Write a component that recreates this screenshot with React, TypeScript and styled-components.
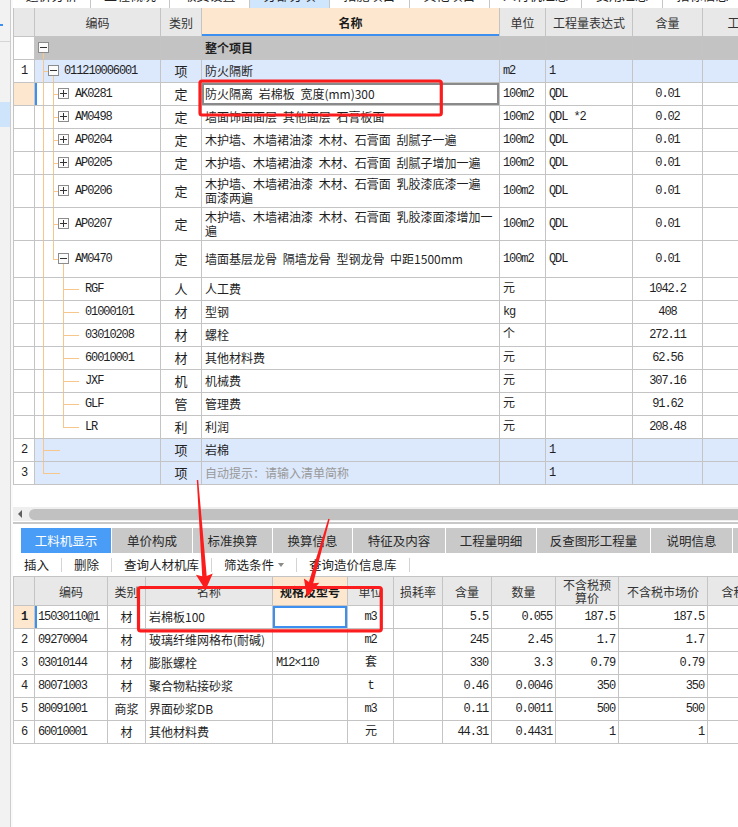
import React from "react";
import styled, { createGlobalStyle, css } from "styled-components";

const LINE = "#c4c4c4";
const TREE = "#f7c68a";
const BLUE = "#3d8ff0";
const PEACH = "#fde8cf";
const ROW_BLUE = "#dce8fb";
const RED = "#fb1d1d";

const GlobalStyle = createGlobalStyle`
  html, body { margin: 0; padding: 0; background: #fff; }
  body {
    font-family: "Noto Sans CJK SC", "Liberation Sans", sans-serif;
    font-size: 12px;
    color: #1f1f1f;
  }
`;

const Page = styled.div`
  position: relative;
  width: 738px;
  height: 827px;
  display: flex;
  overflow: hidden;
  background: #fff;
`;

const Gutter = styled.div`
  flex: none;
  width: 10px;
  border-right: 1px solid #cdcdcd;
  background: #f2f2f2;
  display: flex;
  flex-direction: column;
`;

const GutterMark = styled.div<{ $top: number; $h: number; $w?: number; $color: string }>`
  flex: none;
  margin-top: ${(p) => p.$top}px;
  height: ${(p) => p.$h}px;
  width: ${(p) => (p.$w ? `${p.$w}px` : "100%")};
  background: ${(p) => p.$color};
`;

const GutterGap = styled.div`
  flex: none;
  width: 2px;
  background: #fafafa;
`;

const Main = styled.div`
  flex: 1;
  min-width: 0;
  display: flex;
  flex-direction: column;
  overflow: hidden;
`;

/* ---------- top tab strip (mostly scrolled away) ---------- */

const TopStrip = styled.div`
  flex: none;
  height: 8px;
  display: flex;
  overflow: hidden;
`;

const TopTab = styled.div<{ $w: number; $active?: boolean }>`
  flex: none;
  width: ${(p) => p.$w}px;
  box-sizing: border-box;
  border-right: 1px solid #c6c6c6;
  background: ${(p) => (p.$active ? "#cfe6fc" : "#fff")};
  overflow: hidden;
  text-align: center;
  font-size: 13px;
  line-height: 13px;
  color: #222;

  span {
    display: block;
    margin-top: -12px;
  }
`;

/* ---------- grids ---------- */

type Align = "left" | "center" | "right";
type Tone = "plain" | "root" | "list";

const toneBg = (t: Tone) => (t === "root" ? "#c3c3c3" : t === "list" ? ROW_BLUE : "#fff");

const GridBox = styled.div<{ $top?: boolean }>`
  flex: none;
  display: flex;
  flex-direction: column;
  border-left: 1px solid ${LINE};
  border-top: ${(p) => (p.$top ? `1px solid ${LINE}` : "none")};
`;

const HeadRow = styled.div<{ $h: number }>`
  flex: none;
  display: flex;
  height: ${(p) => p.$h}px;
  box-sizing: border-box;
  border-bottom: 1px solid ${LINE};
  background: #e8e8e8;
`;

const HeadCell = styled.div<{ $w: number; $active?: boolean; $underline?: boolean }>`
  flex: none;
  width: ${(p) => p.$w}px;
  box-sizing: border-box;
  border-right: 1px solid ${LINE};
  display: flex;
  align-items: center;
  justify-content: center;
  text-align: center;
  white-space: pre;
  line-height: 13px;
  color: ${(p) => (p.$active ? "#1a1a1a" : "#333")};
  font-weight: ${(p) => (p.$active ? 700 : 400)};
  background: ${(p) => (p.$active ? PEACH : "transparent")};
  box-shadow: ${(p) => (p.$underline ? `inset 0 -2px 0 ${BLUE}` : "none")};
  overflow: hidden;
`;

const Row = styled.div<{ $h: number; $tone: Tone }>`
  flex: none;
  display: flex;
  height: ${(p) => p.$h}px;
  box-sizing: border-box;
  border-bottom: 1px solid ${LINE};
  background: ${(p) => toneBg(p.$tone)};
`;

const Cell = styled.div<{
  $w: number;
  $align?: Align;
  $bg?: string;
  $focus?: "gray" | "blue";
  $mark?: boolean;
  $size?: number;
}>`
  flex: none;
  position: relative;
  width: ${(p) => p.$w}px;
  box-sizing: border-box;
  border-right: 1px solid ${LINE};
  display: flex;
  align-items: center;
  justify-content: ${(p) =>
    p.$align === "center" ? "center" : p.$align === "right" ? "flex-end" : "flex-start"};
  padding: 0 3px;
  overflow: hidden;
  white-space: pre;
  line-height: 14px;
  font-size: ${(p) => p.$size ?? 12}px;
  background: ${(p) => p.$bg ?? "transparent"};
  ${(p) =>
    p.$focus === "gray" &&
    css`
      box-shadow: inset 0 0 0 2px #8a8a8a;
    `}
  ${(p) =>
    p.$focus === "blue" &&
    css`
      box-shadow: inset 0 0 0 2px ${BLUE};
    `}
  ${(p) =>
    p.$mark &&
    css`
      box-shadow: inset 2px 0 0 ${BLUE};
    `}
`;

const CodeCell = styled(Cell)<{ $indent: number }>`
  padding-left: ${(p) => p.$indent}px;
`;

const Mono = styled.span<{ $bold?: boolean }>`
  font-family: "Liberation Mono", "Noto Sans CJK SC", monospace;
  font-size: 12px;
  letter-spacing: -1.1px;
  font-weight: ${(p) => (p.$bold ? 700 : 400)};
`;

const Name = styled.span<{ $bold?: boolean; $hint?: boolean }>`
  word-spacing: 3px;
  font-weight: ${(p) => (p.$bold ? 700 : 400)};
  color: ${(p) => (p.$hint ? "#999" : "inherit")};
`;

type Part = "full" | "top" | "bottom";

const Guide = styled.span<{ $x: number; $part: Part }>`
  position: absolute;
  left: ${(p) => p.$x}px;
  width: 1px;
  top: ${(p) => (p.$part === "bottom" ? "50%" : "0")};
  bottom: ${(p) => (p.$part === "top" ? "50%" : "0")};
  background: ${TREE};
`;

const Branch = styled.span<{ $from: number; $to: number }>`
  position: absolute;
  left: ${(p) => p.$from}px;
  width: ${(p) => p.$to - p.$from}px;
  top: 50%;
  height: 1px;
  background: ${TREE};
`;

const Toggle = styled.span<{ $x: number; $open: boolean }>`
  position: absolute;
  left: ${(p) => p.$x}px;
  top: 50%;
  margin-top: -6px;
  width: 11px;
  height: 11px;
  box-sizing: border-box;
  border: 1px solid #8c8c8c;
  background: #fbfbfb;

  &::before {
    content: "";
    position: absolute;
    left: 1px;
    right: 1px;
    top: 4px;
    height: 1px;
    background: #333;
  }

  ${(p) =>
    !p.$open &&
    css`
      &::after {
        content: "";
        position: absolute;
        top: 1px;
        bottom: 1px;
        left: 4px;
        width: 1px;
        background: #333;
      }
    `}
`;

type Tree = {
  guides: [number, Part][];
  branch?: [number, number];
  toggle?: [number, boolean];
  indent: number;
};

const T: Record<string, Tree> = {
  root: { guides: [[8, "bottom"]], toggle: [3, true], indent: 20 },
  list: { guides: [[8, "full"], [18, "bottom"]], branch: [8, 13], toggle: [13, true], indent: 29 },
  quota: { guides: [[8, "full"], [18, "full"]], branch: [18, 23], toggle: [23, false], indent: 40 },
  quotaLast: {
    guides: [[8, "full"], [18, "top"], [28, "bottom"]],
    branch: [18, 23],
    toggle: [23, true],
    indent: 40,
  },
  res: { guides: [[8, "full"], [28, "full"]], branch: [28, 44], indent: 50 },
  resLast: { guides: [[8, "full"], [28, "top"]], branch: [28, 44], indent: 50 },
  tail: { guides: [[8, "full"]], branch: [8, 25], indent: 30 },
  tailLast: { guides: [[8, "top"]], branch: [8, 25], indent: 30 },
};

type UpperRow = {
  rn?: string;
  h?: number;
  tone: Tone;
  tree: Tree;
  code?: string;
  cat?: string;
  name: string;
  unit?: string;
  expr?: string;
  qty?: string;
  current?: boolean;
  hint?: boolean;
  bold?: boolean;
};

const WALL = "木护墙、木墙裙油漆 木材、石膏面 ";

const upperRows: UpperRow[] = [
  { tone: "root", tree: T.root, name: "整个项目", bold: true },
  { rn: "1", tone: "list", tree: T.list, code: "011210006001", cat: "项", name: "防火隔断", unit: "m2", expr: "1" },
  { tone: "plain", tree: T.quota, code: "AK0281", cat: "定", name: "防火隔离 岩棉板 宽度(mm)300", unit: "100m2", expr: "QDL", qty: "0.01", current: true },
  { tone: "plain", tree: T.quota, code: "AM0498", cat: "定", name: "墙面饰面面层 其他面层 石膏板面", unit: "100m2", expr: "QDL *2", qty: "0.02" },
  { tone: "plain", tree: T.quota, code: "AP0204", cat: "定", name: WALL + "刮腻子一遍", unit: "100m2", expr: "QDL", qty: "0.01" },
  { tone: "plain", tree: T.quota, code: "AP0205", cat: "定", name: WALL + "刮腻子增加一遍", unit: "100m2", expr: "QDL", qty: "0.01" },
  { h: 33, tone: "plain", tree: T.quota, code: "AP0206", cat: "定", name: WALL + "乳胶漆底漆一遍\n面漆两遍", unit: "100m2", expr: "QDL", qty: "0.01" },
  { h: 33, tone: "plain", tree: T.quota, code: "AP0207", cat: "定", name: WALL + "乳胶漆面漆增加一\n遍", unit: "100m2", expr: "QDL", qty: "0.01" },
  { h: 37, tone: "plain", tree: T.quotaLast, code: "AM0470", cat: "定", name: "墙面基层龙骨 隔墙龙骨 型钢龙骨 中距1500mm", unit: "100m2", expr: "QDL", qty: "0.01" },
  { tone: "plain", tree: T.res, code: "RGF", cat: "人", name: "人工费", unit: "元", qty: "1042.2" },
  { tone: "plain", tree: T.res, code: "01000101", cat: "材", name: "型钢", unit: "kg", qty: "408" },
  { tone: "plain", tree: T.res, code: "03010208", cat: "材", name: "螺栓", unit: "个", qty: "272.11" },
  { tone: "plain", tree: T.res, code: "60010001", cat: "材", name: "其他材料费", unit: "元", qty: "62.56" },
  { tone: "plain", tree: T.res, code: "JXF", cat: "机", name: "机械费", unit: "元", qty: "307.16" },
  { tone: "plain", tree: T.res, code: "GLF", cat: "管", name: "管理费", unit: "元", qty: "91.62" },
  { tone: "plain", tree: T.resLast, code: "LR", cat: "利", name: "利润", unit: "元", qty: "208.48" },
  { rn: "2", tone: "list", tree: T.tail, cat: "项", name: "岩棉", expr: "1" },
  { rn: "3", tone: "list", tree: T.tailLast, cat: "项", name: "自动提示：请输入清单简称", expr: "1", hint: true },
];

const UW = { rn: 21, code: 126, cat: 41, name: 298, unit: 46, expr: 87, qty: 70, rest: 86 };

/* ---------- middle: scrollbar, tabs, toolbar ---------- */

const GridTail = styled.div`
  flex: none;
  height: 22px;
`;

const HScroll = styled.div`
  flex: none;
  height: 14px;
  background: #efefef;
  display: flex;
  align-items: center;
  padding-left: 5px;
  gap: 7px;
`;

const ScrollArrow = styled.span`
  flex: none;
  width: 0;
  height: 0;
  border-top: 4px solid transparent;
  border-bottom: 4px solid transparent;
  border-right: 4px solid #606060;
`;

const ScrollThumb = styled.span`
  flex: 1;
  height: 11px;
  border-radius: 6px 0 0 6px;
  background: #c1c1c1;
`;

const SplitLine = styled.div`
  flex: none;
  height: 2px;
  margin: 1px 0 4px;
  background: #c8c8c8;
`;

const TabBar = styled.div`
  flex: none;
  height: 25px;
  display: flex;
  gap: 1px;
  padding-left: 8px;
`;

const Tab = styled.div<{ $w: number; $active?: boolean }>`
  flex: none;
  width: ${(p) => p.$w}px;
  display: flex;
  align-items: center;
  justify-content: center;
  font-size: 12.5px;
  white-space: nowrap;
  overflow: hidden;
  background: ${(p) => (p.$active ? "#4a9df6" : "#c9c9c9")};
  color: ${(p) => (p.$active ? "#fff" : "#2a2a2a")};
`;

const Toolbar = styled.div`
  flex: none;
  height: 23px;
  display: flex;
  align-items: center;
  padding-left: 11px;
  font-size: 12.5px;
  color: #222;
`;

const ToolItem = styled.span`
  display: flex;
  align-items: center;
  padding: 0 12px;

  &:first-child {
    padding-left: 0;
  }
`;

const Caret = styled.span`
  margin-left: 4px;
  width: 0;
  height: 0;
  border-left: 3px solid transparent;
  border-right: 3px solid transparent;
  border-top: 4px solid #8a8a8a;
`;

const ToolSep = styled.span`
  flex: none;
  width: 1px;
  height: 14px;
  background: #d4d4d4;
`;

/* ---------- lower grid data ---------- */

const LW = [21, 73, 38, 127, 75, 46, 49, 49, 64, 63, 89, 88];
const lowerHead = ["", "编码", "类别", "名称", "规格及型号", "单位", "损耗率", "含量", "数量", "不含税预\n算价", "不含税市场价", "含税市场价"];

const lowerRows = [
  ["1", "15030110@1", "材", "岩棉板100", "", "m3", "", "5.5", "0.055", "187.5", "187.5"],
  ["2", "09270004", "材", "玻璃纤维网格布(耐碱)", "", "m2", "", "245", "2.45", "1.7", "1.7"],
  ["3", "03010144", "材", "膨胀螺栓", "M12×110", "套", "", "330", "3.3", "0.79", "0.79"],
  ["4", "80071003", "材", "聚合物粘接砂浆", "", "t", "", "0.46", "0.0046", "350", "350"],
  ["5", "80091001", "商浆", "界面砂浆DB", "", "m3", "", "0.11", "0.0011", "500", "500"],
  ["6", "60010001", "材", "其他材料费", "", "元", "", "44.31", "0.4431", "1", "1"],
];

/* ---------- annotation overlay ---------- */

const Marks = styled.svg`
  position: absolute;
  left: 0;
  top: 0;
  width: 738px;
  height: 827px;
  pointer-events: none;
`;

function arrow(x1: number, y1: number, x2: number, y2: number, w1: number, w2: number, head: number, half: number) {
  const dx = x2 - x1;
  const dy = y2 - y1;
  const len = Math.hypot(dx, dy);
  const ux = dx / len;
  const uy = dy / len;
  const px = -uy;
  const py = ux;
  const bx = x2 - ux * head;
  const by = y2 - uy * head;
  const pts = [
    [x1 + (px * w1) / 2, y1 + (py * w1) / 2],
    [bx + (px * w2) / 2, by + (py * w2) / 2],
    [bx + px * half - ux * 2, by + py * half - uy * 2],
    [x2, y2],
    [bx - px * half - ux * 2, by - py * half - uy * 2],
    [bx - (px * w2) / 2, by - (py * w2) / 2],
    [x1 - (px * w1) / 2, y1 - (py * w1) / 2],
  ];
  return pts.map((p) => p.map((v) => v.toFixed(1)).join(",")).join(" ");
}

const topTabs: [string, number, boolean?][] = [
  ["造价分析", 78],
  ["工程概况", 79],
  ["取费设置", 80],
  ["分部分项", 80, true],
  ["措施项目", 80],
  ["其他项目", 80],
  ["人材机汇总", 92],
  ["费用汇总", 81],
  ["指标信息", 80],
];

const bottomTabs: [string, number][] = [
  ["工料机显示", 90],
  ["单价构成", 80],
  ["标准换算", 79],
  ["换算信息", 79],
  ["特征及内容", 92],
  ["工程量明细", 90],
  ["反查图形工程量", 113],
  ["说明信息", 81],
  ["组价方案", 80],
];

export default function App() {
  return (
    <Page>
      <GlobalStyle />
      <Gutter>
        <GutterMark $top={24} $h={2} $w={3} $color={BLUE} />
        <GutterMark $top={15} $h={1} $color="#d5d5d5" />
        <GutterMark $top={60} $h={25} $color="#cde4fa" />
      </Gutter>
      <GutterGap />
      <Main>
        <TopStrip>
          {topTabs.map(([t, w, a]) => (
            <TopTab key={t} $w={w} $active={a}>
              <span>{t}</span>
            </TopTab>
          ))}
        </TopStrip>

        <GridBox>
          <HeadRow $h={29}>
            <HeadCell $w={UW.rn} />
            <HeadCell $w={UW.code}>编码</HeadCell>
            <HeadCell $w={UW.cat}>类别</HeadCell>
            <HeadCell $w={UW.name} $active $underline>
              名称
            </HeadCell>
            <HeadCell $w={UW.unit}>单位</HeadCell>
            <HeadCell $w={UW.expr}>工程量表达式</HeadCell>
            <HeadCell $w={UW.qty}>含量</HeadCell>
            <HeadCell $w={UW.rest}>工程量</HeadCell>
          </HeadRow>
          {upperRows.map((r, i) => (
            <Row key={i} $h={r.h ?? 23} $tone={r.tone}>
              <Cell $w={UW.rn} $align="center" $bg={r.current ? PEACH : "#fff"}>
                <Mono>{r.rn}</Mono>
              </Cell>
              <CodeCell $w={UW.code} $indent={r.tree.indent} $mark={r.current}>
                {r.tree.guides.map(([x, part]) => (
                  <Guide key={x} $x={x} $part={part} />
                ))}
                {r.tree.branch && <Branch $from={r.tree.branch[0]} $to={r.tree.branch[1]} />}
                {r.tree.toggle && <Toggle $x={r.tree.toggle[0]} $open={r.tree.toggle[1]} />}
                <Mono>{r.code}</Mono>
              </CodeCell>
              <Cell $w={UW.cat} $align="center" $size={13}>
                {r.cat}
              </Cell>
              <Cell $w={UW.name} $focus={r.current ? "gray" : undefined}>
                <Name $bold={r.bold} $hint={r.hint}>
                  {r.name}
                </Name>
              </Cell>
              <Cell $w={UW.unit}>
                <Mono>{r.unit}</Mono>
              </Cell>
              <Cell $w={UW.expr}>
                <Mono>{r.expr}</Mono>
              </Cell>
              <Cell $w={UW.qty} $align="center">
                <Mono>{r.qty}</Mono>
              </Cell>
              <Cell $w={UW.rest} />
            </Row>
          ))}
        </GridBox>

        <GridTail />
        <HScroll>
          <ScrollArrow />
          <ScrollThumb />
        </HScroll>
        <SplitLine />

        <TabBar>
          {bottomTabs.map(([t, w], i) => (
            <Tab key={t} $w={w} $active={i === 0}>
              {t}
            </Tab>
          ))}
        </TabBar>

        <Toolbar>
          <ToolItem>插入</ToolItem>
          <ToolSep />
          <ToolItem>删除</ToolItem>
          <ToolSep />
          <ToolItem>查询人材机库</ToolItem>
          <ToolSep />
          <ToolItem>
            筛选条件
            <Caret />
          </ToolItem>
          <ToolSep />
          <ToolItem>查询造价信息库</ToolItem>
          <ToolSep />
        </Toolbar>

        <GridBox $top>
          <HeadRow $h={29}>
            {lowerHead.map((h, i) => (
              <HeadCell key={i} $w={LW[i]} $active={i === 4}>
                {h}
              </HeadCell>
            ))}
          </HeadRow>
          {lowerRows.map((r, ri) => {
            const cur = ri === 0;
            return (
              <Row key={ri} $h={23} $tone="plain">
                <Cell $w={LW[0]} $align="center" $bg={cur ? PEACH : "#fff"}>
                  <Mono $bold={cur}>{r[0]}</Mono>
                </Cell>
                <Cell $w={LW[1]} $mark={cur}>
                  <Mono>{r[1]}</Mono>
                </Cell>
                <Cell $w={LW[2]} $align="center">
                  {r[2]}
                </Cell>
                <Cell $w={LW[3]}>{r[3]}</Cell>
                <Cell $w={LW[4]} $focus={cur ? "blue" : undefined}>
                  <Mono>{r[4]}</Mono>
                </Cell>
                <Cell $w={LW[5]} $align="center">
                  <Mono>{r[5]}</Mono>
                </Cell>
                <Cell $w={LW[6]} />
                {r.slice(7).map((v, k) => (
                  <Cell key={k} $w={LW[7 + k]} $align="right">
                    <Mono>{v}</Mono>
                  </Cell>
                ))}
                <Cell $w={LW[11]} />
              </Row>
            );
          })}
        </GridBox>
      </Main>

      <Marks viewBox="0 0 738 827">
        <rect x={200} y={81} width={241.3} height={34} rx={2} fill="none" stroke={RED} strokeWidth={3.2} />
        <rect x={138.5} y={587.5} width={242.8} height={43.3} rx={2} fill="none" stroke={RED} strokeWidth={3.2} />
        <polygon points={arrow(197.5, 480, 205.5, 590, 1.4, 4.5, 14, 8.5)} fill={RED} />
        <polygon points={arrow(329, 519, 307, 597, 1.4, 4.5, 15, 8)} fill={RED} />
      </Marks>
    </Page>
  );
}
